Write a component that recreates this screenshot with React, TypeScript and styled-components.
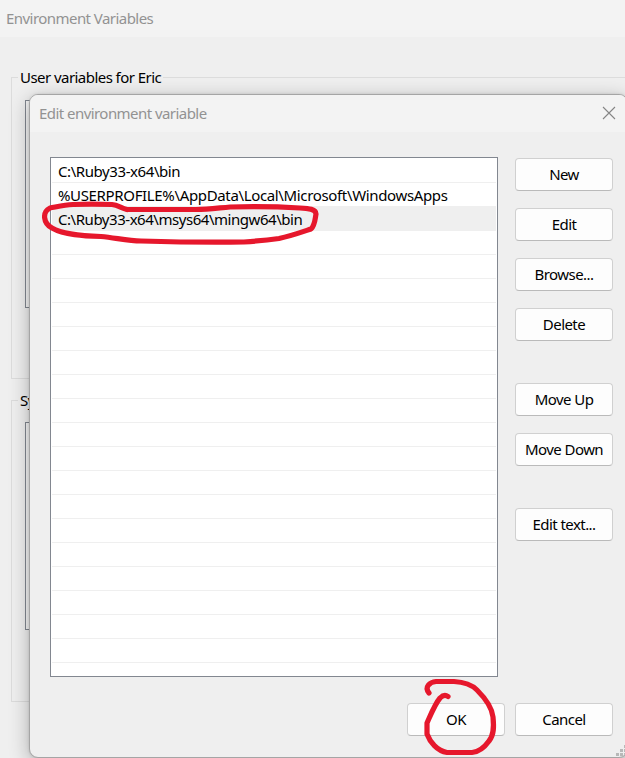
import React from "react";
import styled, { createGlobalStyle } from "styled-components";

const GlobalStyle = createGlobalStyle`
  * { box-sizing: border-box; }
  html, body { margin: 0; height: 100%; overflow: hidden; background: #efefef; }
  body { font-family: "Noto Sans", "Open Sans", sans-serif; font-size: 15px; color: #000; }
`;

const Desktop = styled.div`
  position: relative;
  width: 625px;
  height: 758px;
  overflow: hidden;
  background: #efefef;
`;

const Text = styled.span<{ $track?: number }>`
  letter-spacing: ${(p) => p.$track ?? -0.55}px;
  white-space: nowrap;
`;

const TitleBar = styled.div<{ $left: number }>`
  display: flex;
  align-items: center;
  justify-content: space-between;
  height: 37px;
  padding: 0 10px 1px ${(p) => p.$left}px;
  background: #f3f3f3;
  color: #929292;
`;

const ParentBody = styled.div`
  display: flex;
  flex-direction: column;
  gap: 21px;
  padding: 40px 0 0 11px;
`;

const Group = styled.div<{ $inset: number }>`
  position: relative;
  height: 302px;
  width: 640px;
  border: 1px solid #dcdcdc;
  padding: ${(p) => p.$inset}px 13px;
`;

const Legend = styled.div`
  position: absolute;
  left: 6px;
  top: -12px;
  height: 22px;
  line-height: 22px;
  padding: 0 2px;
  background: #efefef;
`;

const VariableList = styled.div`
  height: 208px;
  border: 1px solid #828790;
  background: #f4f4f4;
`;

const Dialog = styled.div`
  position: absolute;
  left: 29px;
  top: 94px;
  width: 599px;
  height: 664px;
  border: 1px solid #a5a5a5;
  border-radius: 9px;
  overflow: hidden;
  background: #efefef;
  box-shadow: 0 5px 20px rgba(0, 0, 0, 0.28), 0 0 3px rgba(0, 0, 0, 0.12);
`;

const CloseIcon = styled.svg`
  width: 14px;
  height: 14px;
  margin-right: 1px;
`;

const Content = styled.div`
  display: flex;
  align-items: flex-start;
  gap: 17px;
  padding: 25px 0 0 20px;
`;

const PathList = styled.div`
  width: 448px;
  height: 520px;
  padding: 1px;
  border: 1px solid #828790;
  background: #fff;
`;

const PathRow = styled.div<{ $selected?: boolean }>`
  height: 24px;
  padding-left: 6px;
  line-height: 25px;
  white-space: nowrap;
  border-bottom: 1px solid #efefef;
  background: ${(p) => (p.$selected ? "#efefef" : "#fff")};
`;

const Actions = styled.div`
  display: flex;
  flex-direction: column;
  gap: 17px;
  padding-top: 1px;
`;

const Button = styled.button<{ $before?: number }>`
  width: 98px;
  height: 33px;
  margin: ${(p) => p.$before ?? 0}px 0 0;
  padding: 0;
  border: 1px solid #d0d0d0;
  border-bottom-color: #bababa;
  border-radius: 4px;
  background: #fdfdfd;
  color: #000;
  font: inherit;
  line-height: 31px;
`;

const Footer = styled.div`
  display: flex;
  gap: 10px;
  padding: 26px 0 0 377px;
`;

const Grip = styled.svg`
  position: absolute;
  left: 586px;
  top: 650px;
  width: 12px;
  height: 12px;
`;

const Ink = styled.svg`
  position: absolute;
  inset: 0;
  width: 625px;
  height: 758px;
  fill: none;
  stroke: #e6172c;
  stroke-width: 5.2;
  stroke-linecap: round;
  stroke-linejoin: round;
  pointer-events: none;
`;

const paths = [
  { value: "C:\\Ruby33-x64\\bin", track: -0.42 },
  { value: "%USERPROFILE%\\AppData\\Local\\Microsoft\\WindowsApps", track: -0.35 },
  { value: "C:\\Ruby33-x64\\msys64\\mingw64\\bin", track: -0.46, selected: true },
];

const actions = [
  { label: "New" },
  { label: "Edit" },
  { label: "Browse..." },
  { label: "Delete" },
  { label: "Move Up", before: 25 },
  { label: "Move Down" },
  { label: "Edit text...", before: 25 },
];

const emptyRows = Array.from({ length: 18 }, (_, i) => i);

export default function App() {
  return (
    <Desktop>
      <GlobalStyle />
      <TitleBar $left={6}>
        <Text>Environment Variables</Text>
      </TitleBar>
      <ParentBody>
        <Group $inset={22}>
          <Legend><Text>User variables for Eric</Text></Legend>
          <VariableList />
        </Group>
        <Group $inset={21}>
          <Legend><Text>System variables</Text></Legend>
          <VariableList />
        </Group>
      </ParentBody>

      <Dialog>
        <TitleBar $left={9}>
          <Text>Edit environment variable</Text>
          <CloseIcon viewBox="0 0 14 14" fill="none" stroke="#858585" strokeWidth="1.1">
            <path d="M1 1L13 13M13 1L1 13" />
          </CloseIcon>
        </TitleBar>
        <Content>
          <PathList>
            {paths.map((p) => (
              <PathRow key={p.value} $selected={p.selected}>
                <Text $track={p.track}>{p.value}</Text>
              </PathRow>
            ))}
            {emptyRows.map((i) => <PathRow key={i} />)}
          </PathList>
          <Actions>
            {actions.map((a) => (
              <Button key={a.label} $before={a.before}><Text>{a.label}</Text></Button>
            ))}
          </Actions>
        </Content>
        <Footer>
          <Button><Text>OK</Text></Button>
          <Button><Text>Cancel</Text></Button>
        </Footer>
        <Grip viewBox="0 0 12 12" fill="#b8b8b8">
          <path d="M0 8h3v3H0zM4 8h3v3H4zM8 8h3v3H8zM4 4h3v3H4zM8 4h3v3H8zM8 0h3v3H8z" />
        </Grip>
      </Dialog>

      <Ink viewBox="0 0 625 758">
        <path d="M127 209.500C121 208 118 205 112 204.500C98 204 85 204 73 204.500C64 205 56 207 50 208C42 212 43 223 52 228C64 235 84 236 101 236.500C116 238 128 240.500 141 241C175 242 210 242.500 244 242C258 241 268 240 279 238.500C291 236 302 232 311 229C315 225 315 219 316 214C316 209 309 208.500 300 208C275 206.500 250 206.500 230 207C218 208 208 209.500 196 209.500L127 209.500" />
        <path d="M429 693C424 687 430 682 436 681.500L454 681.500C464 682 471 684 477 690C485 698 492 707 493 717C494 727 494 735 489 741C484 748 478 752 472 752.500L447 752.500C437 751 430 742 427 734L427 723C431 714 435 704 440 698C443 695 446 695 448 696.500" />
      </Ink>
    </Desktop>
  );
}
